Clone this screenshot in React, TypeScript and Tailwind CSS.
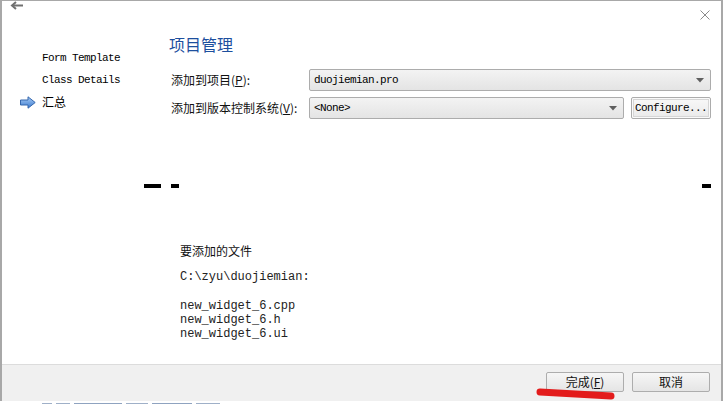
import React from "react";

const cjk = "font-['Noto_Sans_CJK_SC','Noto_Sans',sans-serif]";
const mono = "font-['Liberation_Mono','Noto_Sans_CJK_SC',monospace]";

function SideArrow() {
  return (
    <svg width="16" height="13" viewBox="0 0 16 13">
      <defs>
        <linearGradient id="sa" x1="0" y1="0" x2="0" y2="1">
          <stop offset="0" stopColor="#a9cdf5" />
          <stop offset="1" stopColor="#3b7ad0" />
        </linearGradient>
      </defs>
      <path d="M0.5 4 H8 V0.8 L15.2 6.5 L8 12.2 V9 H0.5 Z" fill="url(#sa)" stroke="#3567ad" strokeWidth="1" />
    </svg>
  );
}

function Caret() {
  return (
    <svg width="8" height="5" viewBox="0 0 8 5">
      <path d="M0 0 H8 L4 4.5 Z" fill="#5f5f5f" />
    </svg>
  );
}

function Combo({ text }: { text: string }) {
  return (
    <div className="flex-1 h-[22px] flex items-center justify-between border border-[#acacac] rounded-[2px] bg-gradient-to-b from-[#f3f3f3] to-[#e4e4e4] pl-[4px] pr-[6px]">
      <span className={`${mono} text-[11px] tracking-[-0.6px] text-black`}>{text}</span>
      <Caret />
    </div>
  );
}

function Btn({ children }: { children: React.ReactNode }) {
  return (
    <div className="h-[20px] w-[78px] flex items-center justify-center border border-[#adadad] rounded-[2px] bg-gradient-to-b from-[#f6f6f6] to-[#e5e5e5] text-[12px] text-[#111]">
      {children}
    </div>
  );
}

export default function App() {
  const sideItems = ["Form Template", "Class Details"];
  const files = ["new_widget_6.cpp", "new_widget_6.h", "new_widget_6.ui"];
  return (
    <div className={`relative w-[725px] h-[404px] bg-white overflow-hidden ${cjk}`}>
      <div className="w-[723px] h-[401px] border-l-2 border-t border-r-2 border-[#a8a8a8] flex flex-col">
        {/* top strip */}
        <div className="h-[29px] flex justify-between items-start">
          <div className="ml-[8px]">
            <svg width="14" height="9" viewBox="0 0 14 9">
              <path d="M13 4.5 H2" stroke="#707070" strokeWidth="2" />
              <path d="M6 1 L2 4.5 L6 8" stroke="#707070" strokeWidth="2" fill="none" />
            </svg>
          </div>
          <div className="mr-[11px] mt-[9px]">
            <svg width="10" height="10" viewBox="0 0 10 10">
              <path d="M0.5 0.5 L9.5 9.5 M9.5 0.5 L0.5 9.5" stroke="#8a8a8a" strokeWidth="1" />
            </svg>
          </div>
        </div>

        {/* body */}
        <div className="flex-1 flex flex-col">
          <div className="flex">
            <div className="w-[167px] pt-[17px] pl-[18px]">
              {sideItems.map((s) => (
                <div key={s} className="h-[22px] flex items-center">
                  <span className="w-[22px]" />
                  <span className={`${mono} text-[11px] tracking-[-0.6px] text-black`}>{s}</span>
                </div>
              ))}
              <div className="h-[22px] flex items-center">
                <span className="w-[22px] flex items-center">
                  <SideArrow />
                </span>
                <span className="text-[12px] text-black">汇总</span>
              </div>
            </div>
            <div className="flex-1 flex flex-col pr-[10px]">
              <div className="mt-[4px] h-[20px] leading-[20px] text-[16px] text-[#1d4f9e]">项目管理</div>
              <div className="mt-[15px] flex items-center">
                <div className="w-[140px] pl-[2px] text-[12px] text-[#111]">
                  添加到项目(<span className="underline">P</span>):
                </div>
                <Combo text="duojiemian.pro" />
              </div>
              <div className="mt-[6px] flex items-center">
                <div className="w-[140px] pl-[2px] text-[12px] text-[#111] whitespace-nowrap">
                  添加到版本控制系统(<span className="underline">V</span>):
                </div>
                <Combo text="<None>" />
                <div className="ml-[7px] w-[80px] h-[22px] p-[1px] border border-[#acacac] rounded-[2px] bg-[#fafafa]">
                  <div className={`h-full flex items-center justify-center border border-[#d6d6d6] bg-gradient-to-b from-[#f7f7f7] to-[#ebebeb] ${mono} text-[11px] tracking-[-0.6px] text-black`}>
                    Configure...
                  </div>
                </div>
              </div>
            </div>
          </div>

          {/* stray separators */}
          <div className="mt-[65px] h-[4px] flex">
            <div className="ml-[142px] w-[17px] bg-black" />
            <div className="ml-[10px] w-[8px] bg-black" />
            <div className="ml-auto mr-[10px] w-[9px] bg-black" />
          </div>

          <div className="ml-[178px] flex flex-col">
            <div className="mt-[55px] h-[16px] leading-[16px] text-[12px] text-[#111]">要添加的文件</div>
            <div className={`mt-[11px] h-[14px] leading-[14px] ${mono} text-[12px] text-[#222]`}>C:\zyu\duojiemian:</div>
            <div className={`mt-[15px] flex flex-col ${mono} text-[12px] leading-[14px] text-[#222]`}>
              {files.map((f) => (
                <div key={f}>{f}</div>
              ))}
            </div>
          </div>
        </div>

        {/* footer */}
        <div className="h-[37px] border-t border-[#dcdcdc] bg-[#f0f0f0] flex justify-end items-start pt-[7px] pr-[11px] gap-[8px]">
          <Btn>
            完成(<span className="underline">F</span>)
          </Btn>
          <Btn>取消</Btn>
        </div>
      </div>

      {/* background fragments below the window */}
      <div className="h-[3px] flex items-end gap-[4px] pl-[42px]">
        <div className="w-[10px] h-[1px] bg-[#9fb0c8]" />
        <div className="w-[14px] h-[1px] bg-[#9fb0c8]" />
        <div className="w-[48px] h-[1px] bg-[#8fa3c0]" />
        <div className="w-[22px] h-[1px] bg-[#9fb0c8]" />
        <div className="w-[40px] h-[1px] bg-[#8fa3c0]" />
        <div className="w-[24px] h-[1px] bg-[#9fb0c8]" />
      </div>

      {/* red marker stroke */}
      <svg className="absolute left-[534px] top-[385px]" width="84" height="16" viewBox="0 0 84 16">
        <path d="M6 7 Q40 9 77 11" stroke="#e31c1c" strokeWidth="7" strokeLinecap="round" fill="none" />
      </svg>
    </div>
  );
}
